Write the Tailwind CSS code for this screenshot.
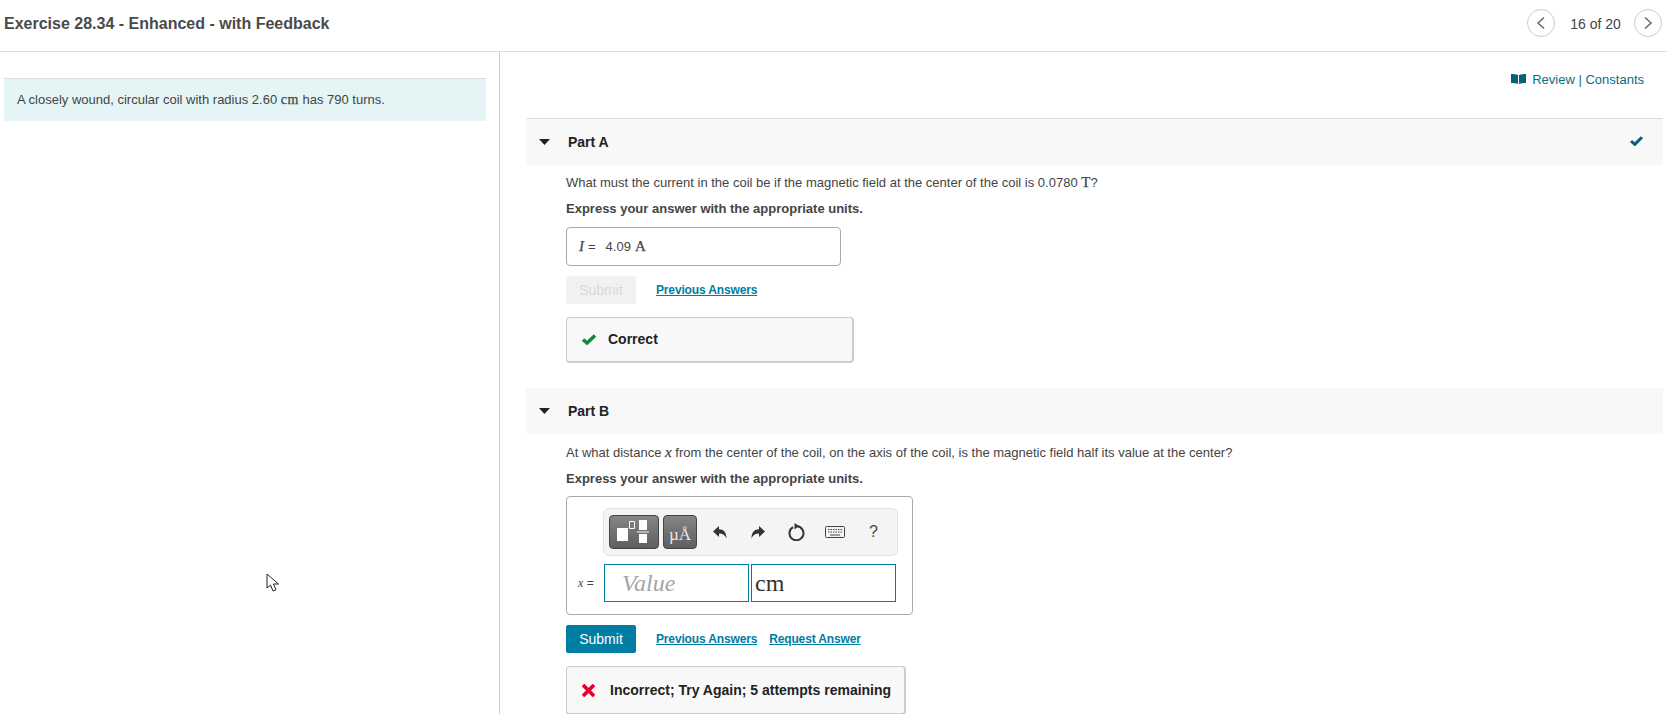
<!DOCTYPE html>
<html lang="en">
<head>
    <meta charset="UTF-8">
    <title>Exercise 28.34 - Enhanced - with Feedback</title>
    <script src="https://cdn.jsdelivr.net/npm/@tailwindcss/browser@4"></script>
</head>
<body class="bg-white font-['Liberation_Sans',Arial,sans-serif] text-[13px] text-[#333] h-[714px] overflow-hidden relative">
    <!-- Top bar -->
    <header class="h-[52px] border-b border-[#ddd] flex items-center pl-1 pr-[5px] pb-[5px]">
        <h1 class="mt-[2px] text-[16px] font-bold text-[#4a4a4a]">Exercise 28.34 - Enhanced - with Feedback</h1>
        <div class="ml-auto flex items-center">
            <button class="w-7 h-7 rounded-full border border-[#ccc] flex items-center justify-center">
                <svg width="10" height="14" viewBox="0 0 10 14" fill="none" stroke="#5f6b75" stroke-width="1.5"><path d="M8 1.500 2 7l6 5.500"/></svg>
            </button>
            <span class="w-[79px] pl-[2px] text-center text-[14px] text-[#444] mt-[2px]">16 of 20</span>
            <button class="w-7 h-7 rounded-full border border-[#ccc] flex items-center justify-center">
                <svg width="10" height="14" viewBox="0 0 10 14" fill="none" stroke="#5f6b75" stroke-width="1.500"><path d="M2 1.500 8 7l-6 5.500"/></svg>
            </button>
        </div>
    </header>

    <div class="flex h-[662px]">
        <!-- Left pane -->
        <aside class="w-[500px] shrink-0 border-r border-[#c5cedc] pt-[26px] pl-1 pr-[13px]">
            <div class="h-[43px] bg-[#e5f5f6] border-t border-[#ddd] pl-[13px] flex items-center text-[#444] pb-px">
                <p>A closely wound, circular coil with radius 2.60 <span class="font-['Liberation_Serif',serif] text-[14px] tracking-[0.5px] [-webkit-text-stroke:0.25px]">cm</span> has 790 turns.</p>
            </div>
        </aside>

        <!-- Right pane -->
        <main class="flex-1 pl-[26px] pr-1 min-w-0">
            <div class="h-[66px] flex items-start justify-end pt-[18px] pr-[19px] text-[#0b6d87]">
                <svg class="mt-[4px] mr-[6px]" width="15" height="10" viewBox="0 0 15 10" fill="#0b5f75"><path d="M0 0c2 0 5 0 7 1v9C5 9 2 9 0 9zM15 0c-2 0-5 0-7 1v9c2-1 5-1 7-1z"/></svg>
                <a>Review | Constants</a>
            </div>

            <!-- Part A -->
            <section>
                <div class="h-[47px] bg-[#f8f8f8] border-t border-[#ddd] flex items-center text-[14px] font-bold text-[#222]">
                    <svg class="ml-[13px] mr-[18px]" width="11" height="6" viewBox="0 0 11 6" fill="#222"><path d="M0 0h11L5.500 6z"/></svg>
                    Part A
                    <svg class="ml-auto mr-[20px] -mt-[2px]" width="13" height="10" viewBox="0 0 13 10" fill="none" stroke="#0b5f75" stroke-width="3"><path d="M1 5l3.800 3.400L12 1.200"/></svg>
                </div>
                <div class="pl-10">
                    <p class="mt-[10px] h-[15px] leading-[15px] text-[#444]">What must the current in the coil be if the magnetic field at the center of the coil is 0.0780 <span class="font-['Liberation_Serif',serif] text-[15px] [-webkit-text-stroke:0.25px]">T</span>?</p>
                    <p class="mt-[11px] h-[15px] leading-[15px] font-bold text-[#444]">Express your answer with the appropriate units.</p>
                    <div class="mt-[11px] w-[275px] h-[39px] border border-[#aaa] rounded-[4px] flex items-center pl-3 text-[#444]">
                        <i class="font-['Liberation_Serif',serif] text-[15px] [-webkit-text-stroke:0.25px]">I</i><span class="ml-1">=</span><span class="ml-[10px]">4.09</span><span class="ml-1 font-['Liberation_Serif',serif] text-[15px] [-webkit-text-stroke:0.25px]">A</span>
                    </div>
                    <div class="mt-[10px] flex items-center">
                        <button class="w-[70px] h-7 bg-[#f1f1f1] rounded-[2px] text-[14px] text-[#d9d9d9]">Submit</button>
                        <a class="ml-5 text-[12px] font-bold text-[#007da3] underline tracking-[-0.15px]">Previous Answers</a>
                    </div>
                    <div class="mt-[13px] w-[288px] h-[46px] bg-[#f8f8f8] border border-[#ccc] border-b-2 border-r-2 rounded-[4px] flex items-center pl-[15px] text-[14px] font-bold text-[#222]">
                        <svg class="mr-[12px]" width="14" height="11" viewBox="0 0 14 11" fill="none" stroke="#0f8a3c" stroke-width="3.500"><path d="M1 5.500l4 3.500 8-7.500"/></svg>
                        Correct
                    </div>
                </div>
            </section>

            <!-- Part B -->
            <section class="mt-[25px]">
                <div class="h-[46px] bg-[#f8f8f8] flex items-center text-[14px] font-bold text-[#222]">
                    <svg class="ml-[13px] mr-[18px]" width="11" height="6" viewBox="0 0 11 6" fill="#222"><path d="M0 0h11L5.500 6z"/></svg>
                    Part B
                </div>
                <div class="pl-10">
                    <p class="mt-[11px] h-[15px] leading-[15px] text-[#444]">At what distance <i class="font-['Liberation_Serif',serif] text-[15px] [-webkit-text-stroke:0.25px]">x</i> from the center of the coil, on the axis of the coil, is the magnetic field half its value at the center?</p>
                    <p class="mt-[11px] h-[15px] leading-[15px] font-bold text-[#444]">Express your answer with the appropriate units.</p>
                    <div class="mt-[10px] w-[347px] h-[119px] border border-[#aaa] rounded-[4px] pt-[11px] pl-9">
                        <div class="w-[295px] h-[48px] bg-[#f4f4f4] border border-[#e2e2e2] rounded-[6px] flex items-center pl-[5px]">
                            <div class="w-[50px] h-[34px] rounded-[4px] border border-[#444] bg-gradient-to-b from-[#858585] to-[#5f5f5f]">
                                <svg width="48" height="32" viewBox="0 0 48 32"><path fill="#fff" d="M7 12h11v13H7zM29 4h8v10h-8zM29 18h8v9h-8z"/><path fill="#fff" d="M27 15.500h12v1H27z"/><path fill="none" stroke="#fff" d="M19.500 5.500h5v7h-5z"/></svg>
                            </div>
                            <div class="ml-1 w-[34px] h-[34px] rounded-[4px] border border-[#444] bg-gradient-to-b from-[#858585] to-[#5f5f5f] text-[#e8e8e8] font-['Liberation_Serif',serif] text-[17px] leading-[38px] text-center">µÅ</div>
                            <svg class="ml-[16px]" width="14" height="13" viewBox="0 0 14 13" fill="#333"><path d="M6 0v3.200c4.500 0 7.500 3 7.500 9.300C12 9 9.800 7.500 6 7.500v3.500L0 5.500z"/></svg>
                            <svg class="ml-[24px]" width="14" height="13" viewBox="0 0 14 13" fill="#333"><path d="M8 0v3.200C3.500 3.200.500 6.200.500 12.500 2 9 4.200 7.500 8 7.500v3.500l6-5.500z"/></svg>
                            <svg class="ml-[22px]" width="18" height="18" viewBox="0 0 18 18" fill="none" stroke="#333" stroke-width="2"><path d="M6 4.200a7 7 0 1 0 4-.9"/><path d="M7.500 0v6.500L12 3z" fill="#333" stroke="none"/></svg>
                            <svg class="ml-[20px]" width="20" height="12" viewBox="0 0 20 12" fill="none" stroke="#444"><rect x=".5" y=".5" width="19" height="11" rx="1"/><path d="M3 3.500h14M3 6h14" stroke-dasharray="1.500 1"/><path d="M5 9h10"/></svg>
                            <span class="ml-[24px] text-[16px] text-[#444]">?</span>
                        </div>
                        <div class="mt-2 flex items-center -ml-[25px]">
                            <span class="w-[26px] text-[12px] text-[#444]"><i class="font-['Liberation_Serif',serif]">x</i> =</span>
                            <div class="w-[145px] h-[38px] border border-[#007da3] pl-[17px] flex items-center font-['Liberation_Serif',serif] italic text-[24px] text-[#a5a5a5]">Value</div>
                            <div class="ml-[2px] w-[145px] h-[38px] border border-[#007da3] pl-[3px] flex items-center font-['Liberation_Serif',serif] text-[24px] text-[#333]">cm</div>
                        </div>
                    </div>
                    <div class="mt-[10px] flex items-center">
                        <button class="w-[70px] h-7 bg-[#007da3] rounded-[2px] text-[14px] text-white">Submit</button>
                        <a class="ml-5 text-[12px] font-bold text-[#007da3] underline tracking-[-0.15px]">Previous Answers</a>
                        <a class="ml-3 text-[12px] font-bold text-[#007da3] underline tracking-[-0.15px]">Request Answer</a>
                    </div>
                    <div class="mt-[13px] w-[340px] h-[49px] bg-[#f8f8f8] border border-[#ccc] border-b-2 border-r-2 rounded-[4px] flex items-center pl-[15px] text-[14px] font-bold text-[#222]">
                        <svg class="mr-[15px]" width="13" height="13" viewBox="0 0 13 13" stroke="#e0002b" stroke-width="3.600"><path d="M1 1l11 11M12 1 1 12"/></svg>
                        Incorrect; Try Again; 5 attempts remaining
                    </div>
                </div>
            </section>
        </main>
    </div>

    <!-- Mouse pointer caught in the screenshot -->
    <svg class="absolute left-[266px] top-[573px]" width="14" height="20" viewBox="0 0 14 20" fill="#fff" stroke="#222"><path d="M1 1v14l3.500-3 2.500 6 3-1.200-2.500-5.800H12.500z"/></svg>
</body>
</html>
